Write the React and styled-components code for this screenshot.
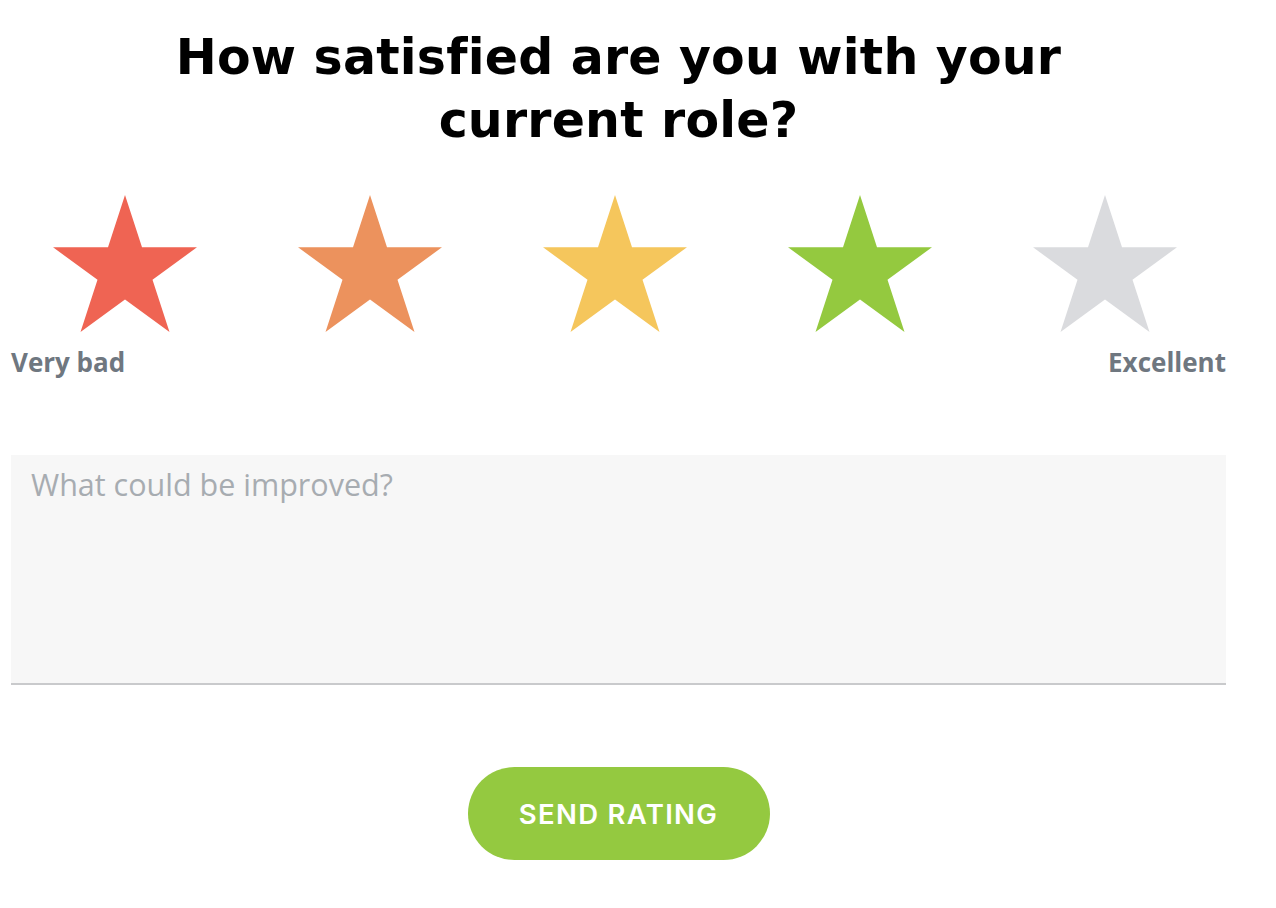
import React from 'react';
import styled, { createGlobalStyle } from 'styled-components';

const GlobalStyle = createGlobalStyle`
  html, body {
    margin: 0;
    padding: 0;
    background: #ffffff;
  }
`;

const Page = styled.div`
  width: 1215px;
  padding: 26px 0 40px 11px;
  display: flex;
  flex-direction: column;
  align-items: center;
`;

const Heading = styled.h1`
  margin: 0;
  max-width: 940px;
  text-align: center;
  font-family: 'DejaVu Sans', sans-serif;
  font-weight: 700;
  font-size: 49px;
  line-height: 63px;
  letter-spacing: 0.2px;
  color: #000000;
`;

const StarRow = styled.div`
  display: flex;
  gap: 101px;
  margin-top: 43px;
  margin-right: 8px;
`;

const StarButton = styled.button`
  border: none;
  background: none;
  padding: 0;
  cursor: pointer;
  width: 144px;
  height: 137px;
  display: block;
`;

const Labels = styled.div`
  align-self: stretch;
  display: flex;
  justify-content: space-between;
  margin-top: 14px;
  font-family: 'Open Sans', sans-serif;
  font-weight: 700;
  font-size: 26px;
  line-height: 32px;
  color: #6f7780;
`;

const Feedback = styled.textarea`
  align-self: stretch;
  box-sizing: border-box;
  height: 230px;
  margin-top: 77px;
  padding: 8px 20px;
  border: none;
  border-bottom: 2px solid #c9cacc;
  background: #f7f7f7;
  resize: none;
  outline: none;
  font-family: 'Open Sans', sans-serif;
  font-size: 30.5px;
  line-height: 42px;
  color: #333;

  &::placeholder {
    color: #a7acb1;
  }
`;

const SendButton = styled.button`
  margin-top: 82px;
  width: 302px;
  height: 93px;
  border: none;
  border-radius: 47px;
  background: #94c940;
  color: #ffffff;
  font-family: 'Inter', sans-serif;
  font-weight: 600;
  font-size: 27.5px;
  letter-spacing: 1.3px;
  cursor: pointer;
`;

const starPoints = (() => {
  const pts = [];
  const cx = 72;
  const cy = 75.7;
  const R = 75.7;
  const r = R * 0.382;
  for (let i = 0; i < 10; i++) {
    const a = (-90 + i * 36) * (Math.PI / 180);
    const rad = i % 2 === 0 ? R : r;
    pts.push(`${(cx + rad * Math.cos(a)).toFixed(2)},${(cy + rad * Math.sin(a)).toFixed(2)}`);
  }
  return pts.join(' ');
})();

const stars = [
  { value: 1, color: '#ef6453' },
  { value: 2, color: '#ec925d' },
  { value: 3, color: '#f5c65c' },
  { value: 4, color: '#94c93f' },
  { value: 5, color: '#dadbde' },
];

const Star = ({ color, label }) => (
  <StarButton aria-label={label}>
    <svg width="144" height="137" viewBox="0 0 144 137">
      <polygon points={starPoints} fill={color} />
    </svg>
  </StarButton>
);

const App = () => {
  return (
    <Page>
      <GlobalStyle />
      <Heading>How satisfied are you with your current role?</Heading>
      <StarRow>
        {stars.map((s) => (
          <Star key={s.value} color={s.color} label={`${s.value} stars`} />
        ))}
      </StarRow>
      <Labels>
        <span>Very bad</span>
        <span>Excellent</span>
      </Labels>
      <Feedback placeholder="What could be improved?" />
      <SendButton>SEND RATING</SendButton>
    </Page>
  );
};

export default App;
